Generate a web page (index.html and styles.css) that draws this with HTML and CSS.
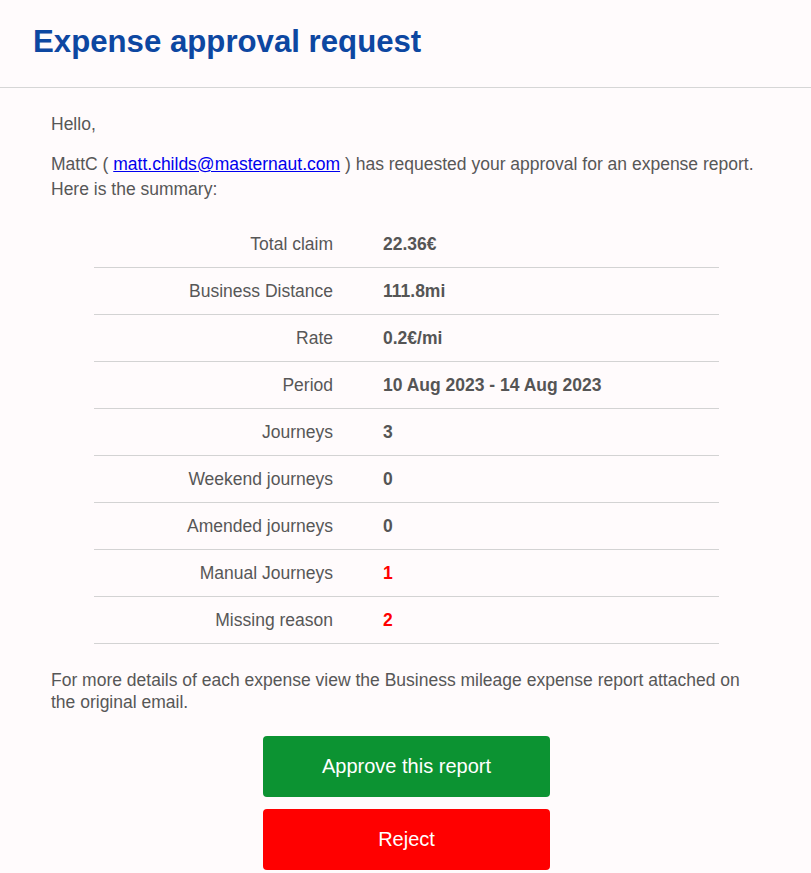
FILE: index.html
```html
<!DOCTYPE html>
<html>
<head>
<meta charset="utf-8">
<link rel="stylesheet" href="styles.css">
</head>
<body>
<header class="header">
  <h1 class="title">Expense approval request</h1>
</header>
<main class="content">
  <p class="intro">Hello,</p>
  <p class="intro">MattC ( <a class="link" href="#">matt.childs@masternaut.com</a> ) has requested your approval for an expense report.<br>Here is the summary:</p>
  <table class="summary">
    <tr><td class="label">Total claim</td><td class="value">22.36€</td></tr>
    <tr><td class="label">Business Distance</td><td class="value">111.8mi</td></tr>
    <tr><td class="label">Rate</td><td class="value">0.2€/mi</td></tr>
    <tr><td class="label">Period</td><td class="value">10 Aug 2023 - 14 Aug 2023</td></tr>
    <tr><td class="label">Journeys</td><td class="value">3</td></tr>
    <tr><td class="label">Weekend journeys</td><td class="value">0</td></tr>
    <tr><td class="label">Amended journeys</td><td class="value">0</td></tr>
    <tr><td class="label">Manual Journeys</td><td class="value alert">1</td></tr>
    <tr><td class="label">Missing reason</td><td class="value alert">2</td></tr>
  </table>
  <p class="note">For more details of each expense view the Business mileage expense report attached on the original email.</p>
  <div class="actions">
    <a class="btn btn-approve" href="#">Approve this report</a>
    <a class="btn btn-reject" href="#">Reject</a>
  </div>
</main>
</body>
</html>
```
FILE: styles.css
```css
html, body {
  margin: 0;
  padding: 0;
  background: #fffbfc;
}
body {
  font-family: "Liberation Sans", Arial, sans-serif;
  color: #575757;
  font-size: 17.5px;
}
.header {
  padding: 22px 33px 0;
  height: 65px;
  border-bottom: 1px solid #d6d6d6;
}
.title {
  margin: 0;
  font-size: 31.2px;
  line-height: 40px;
  font-weight: bold;
  color: #0d47a1;
}
.content {
  padding: 24px 49px 0 51px;
}
.intro {
  margin: 0 0 15px;
  line-height: 25px;
}
.link {
  color: #0000ee;
  text-decoration: underline;
}
.summary {
  width: 625px;
  margin: 19px auto 0;
  border-collapse: collapse;
}
.summary tr {
  border-top: 1px solid #d3d3d3;
}
.summary tr:first-child {
  border-top: none;
}
.summary tr:last-child {
  border-bottom: 1px solid #d3d3d3;
}
.summary td {
  height: 46px;
  padding: 0;
  vertical-align: middle;
}
.label {
  width: 239px;
  text-align: right;
  padding-right: 0;
}
.summary td.value {
  padding-left: 50px;
  font-weight: bold;
  color: #555555;
}
.summary td.alert {
  color: #ff0000;
}
.note {
  margin: 25px 0 0;
  line-height: 22px;
}
.actions {
  display: flex;
  flex-direction: column;
  align-items: center;
  gap: 12px;
  margin-top: 23px;
}
.btn {
  display: flex;
  align-items: center;
  justify-content: center;
  width: 287px;
  height: 61px;
  border-radius: 4px;
  color: #ffffff;
  font-size: 20px;
  text-decoration: none;
}
.btn-approve {
  background: #0c9332;
}
.btn-reject {
  background: #ff0000;
}
```
